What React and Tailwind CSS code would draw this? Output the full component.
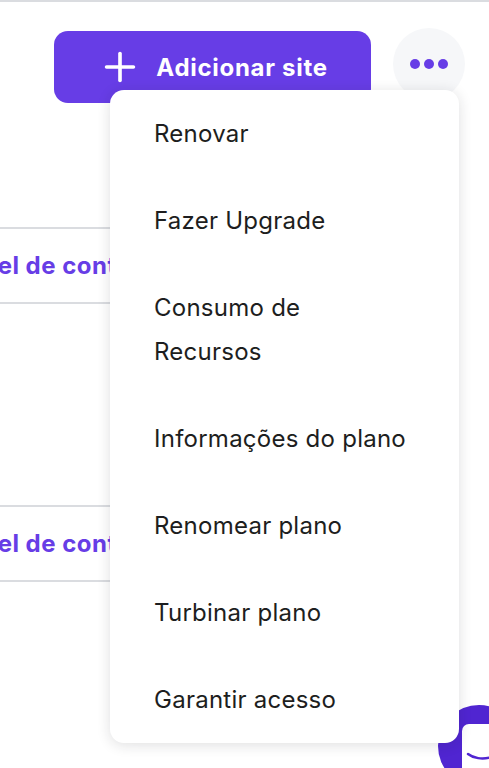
import { Plus } from 'lucide-react';

const menuItems = ['Renovar', 'Fazer Upgrade', 'Consumo de Recursos', 'Informações do plano', 'Renomear plano', 'Turbinar plano', 'Garantir acesso'];

function PanelLink({ className }) {
  return (
    <div className={`-ml-[72px] flex h-[77px] w-[320px] items-center border-2 border-[#dadce0] pl-[15px] ${className}`}>
      <span className="whitespace-nowrap text-[24px] font-bold tracking-[0.5px] text-[#673de6]">Painel de controle</span>
    </div>
  );
}

export default function App() {
  return (
    <div className="relative h-[768px] w-[489px] overflow-hidden border-t-2 border-[#dadce0] bg-white" style={{ fontFamily: 'Inter, "Liberation Sans", sans-serif' }}>
      <div className="flex items-start justify-end gap-[22px] pr-[24px] pt-[26px]">
        <button className="mt-[3px] flex h-[72px] w-[317px] items-center justify-center gap-[13px] rounded-[14px] bg-[#673de6] text-[24px] font-bold tracking-[0.7px] text-white">
          <Plus size={46} strokeWidth={1.9} />
          <span className="pt-[2px]">Adicionar site</span>
        </button>
        <button className="flex h-[72px] w-[72px] items-center justify-center gap-[4px] rounded-full bg-[#f6f7f9]">
          <span className="h-[10px] w-[10px] rounded-full bg-[#673de6]" />
          <span className="h-[10px] w-[10px] rounded-full bg-[#673de6]" />
          <span className="h-[10px] w-[10px] rounded-full bg-[#673de6]" />
        </button>
      </div>

      <PanelLink className="mt-[124px]" />
      <PanelLink className="mt-[201px]" />

      <div className="absolute right-[-31px] top-[703px] h-[82px] w-[82px] rounded-full bg-[#5025d1]">
        <div className="absolute left-[24px] top-[19px] h-[50px] w-[50px] rounded-[7px] bg-white">
          <svg width="34" height="12" viewBox="0 0 34 12" fill="none" className="absolute left-[4px] top-[28px]">
            <path d="M2 2c5 4 14 6 24 3" stroke="#5025d1" strokeWidth="2.5" strokeLinecap="round" />
          </svg>
        </div>
      </div>

      <ul className="absolute left-[110px] top-[88px] w-[349px] rounded-[14px] bg-white text-[24px] leading-[44px] tracking-[0.25px] text-[#1d1e20] shadow-[0_2px_14px_rgba(29,30,32,0.14)]">
        {menuItems.map((item) => (
          <li key={item} className="py-[21.5px] pl-[44px] pr-[40px]">
            <span className="block max-w-[256px]">{item}</span>
          </li>
        ))}
      </ul>
    </div>
  );
}
